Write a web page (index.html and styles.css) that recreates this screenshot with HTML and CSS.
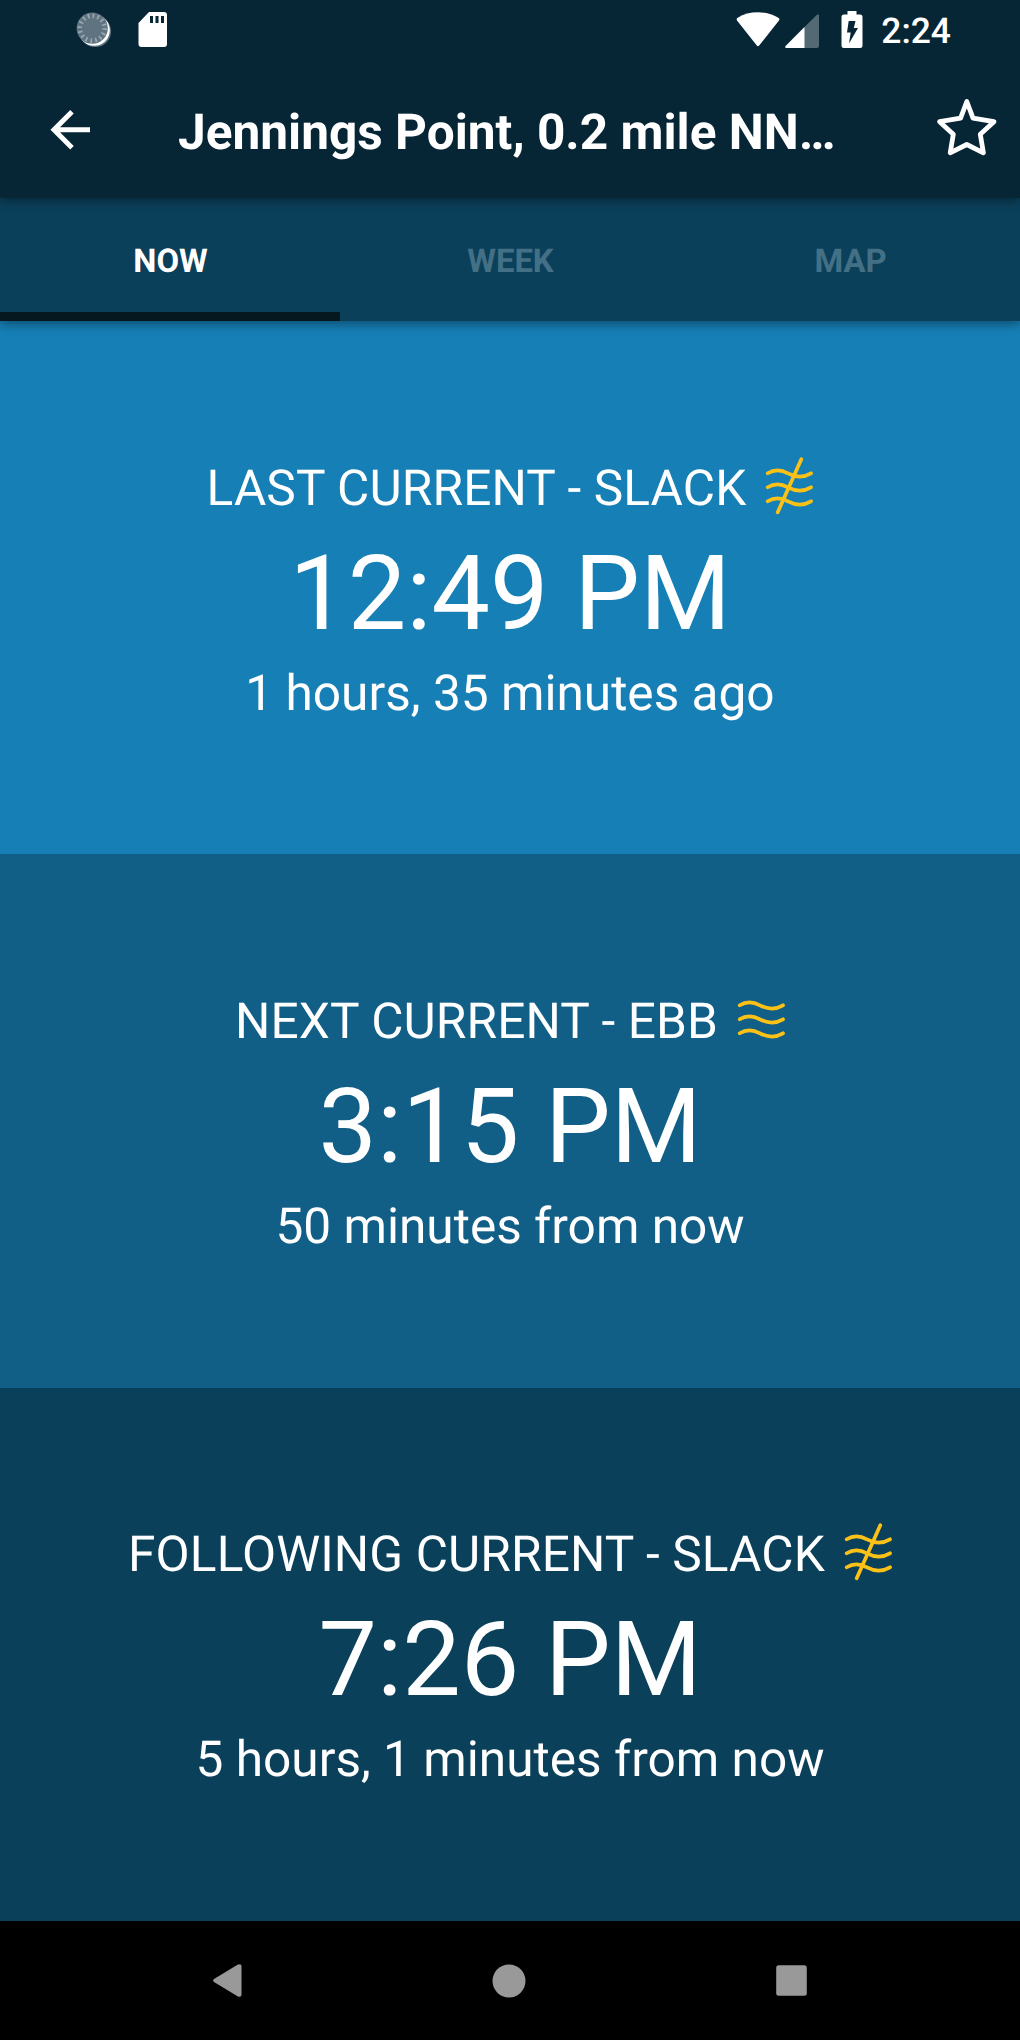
FILE: index.html
```html
<!DOCTYPE html>
<html lang="en">
<head>
<meta charset="utf-8">
<title>Jennings Point</title>
<link rel="stylesheet" href="styles.css">
</head>
<body>
<svg class="defs" width="0" height="0">
  <symbol id="waves" viewBox="0 0 48 58">
    <path d="M2.7 16.3C8 13 15 12 23 16.3S38 21 46 16.3M2.7 30.3C8 27 15 26 23 30.3S38 35 46 30.3M2.7 44.3C8 41 15 40 23 44.3S38 49 46 44.3"/>
  </symbol>
</svg>
<div class="screen">
  <header class="top">
    <div class="status">
      <svg class="sync" width="36" height="36" viewBox="0 0 36 36">
        <circle cx="19.3" cy="19.3" r="15.8" fill="#5f7480"/>
        <circle cx="18.2" cy="18.2" r="15.6" fill="#fff"/>
        <circle cx="16.2" cy="16.2" r="15.6" fill="#5f7480"/>
        <circle cx="16.2" cy="16.2" r="12.4" fill="none" stroke="#9aa8b0" stroke-width="4.6" stroke-dasharray="1.7 3.17"/>
      </svg>
      <svg class="card" width="30" height="38" viewBox="0 0 30 38">
        <path d="M11 1H26Q29 1 29 4V33Q29 36 26 36H3.500Q.5 36 .5 33V12Z" fill="#fff"/>
        <path d="M12 5h3v7h-3zM17.500 5h3v7h-3zM23 5h3v7h-3z" fill="#062535"/>
      </svg>
      <span class="spacer"></span>
      <svg class="wifi" width="44" height="36" viewBox="0 0 44 36">
        <path d="M1.200 8.800Q-.2 7 1.700 5.700Q10.500 .3 22 .3T42.300 5.700Q44.200 7 42.800 8.800L23.200 33.500Q22 35 20.800 33.500Z" fill="#fff"/>
      </svg>
      <svg class="signal" width="34" height="34" viewBox="0 0 34 34">
        <path d="M19 13.500 32 .7Q34 -.8 34 1.700V32Q34 34 32 34H19Z" fill="#536973"/>
        <path d="M19.500 13V34H1.500Q-.8 34 .8 31.800Z" fill="#fff"/>
      </svg>
      <svg class="battery" width="22" height="37" viewBox="0 0 22 37">
        <path d="M6.500 0H15.500V3.500H19Q21.500 3.500 21.500 6V34.500Q21.500 37 19 37H3Q.5 37 .5 34.500V6Q.5 3.500 3 3.500H6.500Z" fill="#fff"/>
        <path d="M7.700 10H14.500L12.800 17H17L8 32.500 9.700 21.500H6Z" fill="#062535"/>
      </svg>
      <span class="clock">2:24</span>
    </div>
    <div class="appbar">
      <svg class="back" width="40" height="40" viewBox="0 0 40 40" fill="none" stroke="#fff" stroke-width="5">
        <path d="M40 19.800H4M22 1.800 4 19.800 22 37.800"/>
      </svg>
      <h1 class="title">Jennings Point, 0.2 mile NN…</h1>
      <svg class="star" width="60" height="58" viewBox="0 0 60 58" fill="none" stroke="#fff" stroke-width="4.800" stroke-linejoin="round">
        <path d="M29.800 2.500 36 19.200 57 22.700 43.300 35.300 46.400 53.800 29.800 45.500 13.200 53.800 16.300 35.300 2.600 22.700 23.600 19.200Z"/>
      </svg>
    </div>
  </header>
  <nav class="tabs">
    <span class="tab active">NOW</span>
    <span class="tab">WEEK</span>
    <span class="tab">MAP</span>
  </nav>
  <main class="panels">
    <section class="panel last">
      <div class="label"><span>LAST CURRENT - SLACK</span>
        <svg class="icon" viewBox="0 0 48 58"><use href="#waves"/><path d="M36.300 2.200 12.700 55.300"/></svg></div>
      <div class="time">12:49 PM</div>
      <div class="delta">1 hours, 35 minutes ago</div>
    </section>
    <section class="panel next">
      <div class="label"><span>NEXT CURRENT - EBB</span>
        <svg class="icon ebb" viewBox="0 0 48 58"><use href="#waves"/></svg></div>
      <div class="time">3:15 PM</div>
      <div class="delta">50 minutes from now</div>
    </section>
    <section class="panel following">
      <div class="label"><span>FOLLOWING CURRENT - SLACK</span>
        <svg class="icon" viewBox="0 0 48 58"><use href="#waves"/><path d="M36.300 2.200 12.700 55.300"/></svg></div>
      <div class="time">7:26 PM</div>
      <div class="delta">5 hours, 1 minutes from now</div>
    </section>
  </main>
  <footer class="navbar">
    <svg width="29" height="33" viewBox="0 0 29 33"><path d="M1 15 24.500 .8Q28.500 -.8 28.500 2.500V30.500Q28.500 33.800 24.500 32.200L1 18Q-.8 16.500 1 15Z" fill="#999"/></svg>
    <svg width="34" height="34" viewBox="0 0 34 34"><circle cx="17" cy="17" r="16.500" fill="#999"/></svg>
    <svg width="31" height="31" viewBox="0 0 31 31"><rect x=".2" y=".2" width="30.600" height="30.600" rx="2.500" fill="#999"/></svg>
  </footer>
</div>
</body>
</html>
```
FILE: styles.css
```css
* { box-sizing: border-box; }
body {
  margin: 0;
  font-family: Roboto, "Liberation Sans", sans-serif;
  color: #fff;
  text-rendering: geometricPrecision;
}
svg { display: block; flex: none; }
.defs { position: absolute; }
.screen {
  width: 1020px;
  height: 2040px;
  display: flex;
  flex-direction: column;
  overflow: hidden;
}
.top {
  flex: 0 0 198px;
  background: #062535;
  box-shadow: 0 3px 10px rgba(0, 0, 0, .4);
  z-index: 2;
}
.status {
  height: 60px;
  display: flex;
  align-items: flex-start;
  padding: 11px 69px 0 76px;
}
.sync { margin-top: 1px; }
.card { margin-left: 26px; }
.spacer { flex: 1; }
.wifi { margin-top: 1px; }
.signal { margin: 3px 22px 0 5px; }
.battery { margin-right: 18px; }
.clock {
  font-size: 35.400px;
  font-weight: 500;
  line-height: 42px;
  margin-top: -1px;
}
.appbar {
  height: 138px;
  display: flex;
  align-items: flex-start;
  padding: 0 23px 0 50px;
}
.back { margin-top: 50px; }
.title {
  margin: 43px 0 0 88px;
  font-size: 49.580px;
  font-weight: 700;
  line-height: 60px;
  white-space: nowrap;
}
.star { margin: 39px 0 0 auto; overflow: visible; }
.tabs {
  flex: 0 0 123px;
  display: flex;
  background: #0b405b;
  box-shadow: 0 3px 10px rgba(0, 0, 0, .4);
  z-index: 1;
}
.tab {
  flex: 1;
  border-bottom: 9px solid transparent;
  padding: 43px 0 0 1px;
  text-align: center;
  font-size: 32.800px;
  font-weight: 700;
  line-height: 42px;
  color: #447086;
}
.active { color: #fff; border-color: #05171f; }
.panels { flex: 1; display: flex; flex-direction: column; }
.panel {
  flex: 1;
  display: flex;
  flex-direction: column;
  align-items: center;
  padding-top: 136.600px;
  white-space: nowrap;
}
.last { background: #167fb5; }
.next { background: #115e86; }
.following { background: #0b405b; }
.label {
  display: flex;
  height: 62px;
  gap: 19px;
  font-size: 49.580px;
  letter-spacing: .13px;
  line-height: 62px;
}
.icon {
  width: 48px;
  height: 58px;
  margin-top: -1px;
  fill: none;
  stroke: #fbc117;
  stroke-width: 3.700;
  stroke-linecap: round;
}
.ebb { margin-top: -2.200px; }
.time {
  margin-top: 13px;
  font-size: 104.120px;
  line-height: 122px;
}
.delta {
  margin-top: 9px;
  font-size: 49.580px;
  line-height: 60px;
}
.navbar {
  flex: 0 0 119px;
  background: #000;
  display: flex;
  justify-content: space-between;
  align-items: center;
  padding: 0 213px;
}
```
